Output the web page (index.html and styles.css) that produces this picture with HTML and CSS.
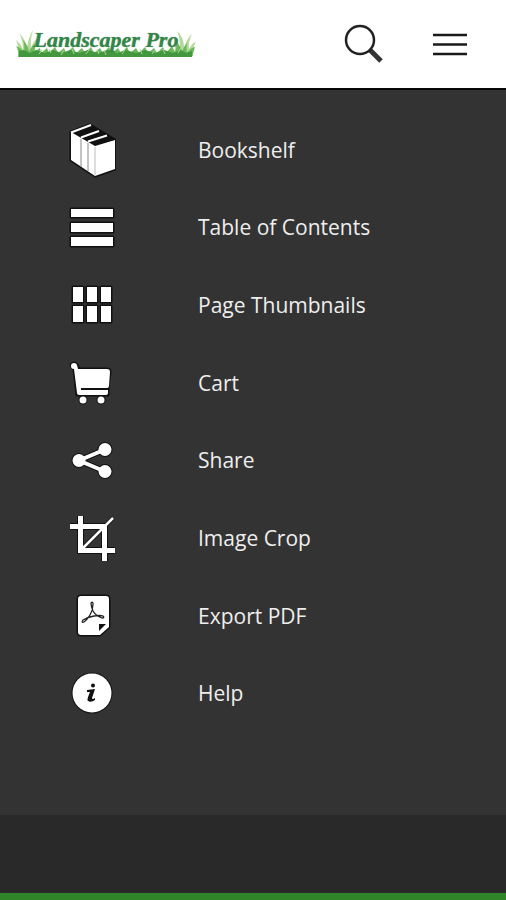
FILE: index.html
```html
<!DOCTYPE html>
<html lang="en">
<head>
<meta charset="utf-8">
<meta name="viewport" content="width=device-width, initial-scale=1">
<title>Landscaper Pro</title>
<link rel="stylesheet" href="styles.css">
</head>
<body>
<header class="header">
  <a class="logo" href="#">
    <svg class="logo-grass" viewBox="0 0 180 32" aria-hidden="true">
      <path fill="#b4d99a" d="M3 28Q3 18 0 12Q6 17 7 22Q7 12 3 5Q10 12 11 21Q12 10 17 2Q14 12 15 20Q18 12 22 10Q18 18 19 28ZM158 28Q160 18 158 10Q163 14 164 21Q164 9 161 3Q168 9 168 20Q171 10 176 6Q172 14 173 21Q176 15 180 14Q176 20 177 28Z"/>
      <path fill="#6ab85c" d="M2 29Q3 22 0 18Q6 20 8 25Q9 17 7 12Q12 17 13 24Q16 17 20 15L18 24L24 20L25 25L31 20L33 25L39 19L42 25L48 20L50 25L57 19L60 25L66 20L69 25L75 19L78 25L84 20L87 25L93 19L96 25L102 20L105 25L111 19L114 25L120 20L123 25L129 19L132 25L138 20L141 25L147 19L150 25L156 18L159 24Q161 18 160 14Q165 18 166 24Q168 18 171 15Q170 20 171 25Q174 20 179 19L176 29Z"/>
      <path fill="#43973f" d="M3 29V23L8 22L14 25L20 22L29 25L37 22L46 25L54 22L63 25L72 22L82 25L92 22L101 25L110 22L120 25L129 22L139 25L148 22L157 25L165 22L170 25L176 23V29Z"/>
      <path fill="none" stroke="#a8d592" d="M23 26L26 22M35 25L33 21M45 27L48 22M58 26L56 21M70 26L73 22M83 26L81 21M90 27L88 22M106 26L109 22M126 26L124 21M136 26L139 22M149 26L147 21M162 25L165 20"/>
    </svg>
    <span class="logo-text">Landscaper Pro</span>
  </a>
  <div class="actions">
    <button class="action" type="button" aria-label="Search">
      <svg class="action-icon" viewBox="0 0 40 40" fill="none" aria-hidden="true">
        <path d="M26 26L37 37" stroke="#333" stroke-width="5"/>
        <circle cx="16" cy="16" r="14" stroke="#222" stroke-width="2.500"/>
      </svg>
    </button>
    <button class="action" type="button" aria-label="Menu">
      <svg class="action-icon" viewBox="0 0 40 40" fill="none" stroke="#1a1a1a" stroke-width="2.500" aria-hidden="true">
        <path d="M3 11H37M3 20.500H37M3 30H37"/>
      </svg>
    </button>
  </div>
</header>
<nav class="menu" aria-label="Main">
  <a class="item" href="#">
    <svg class="icon" viewBox="0 0 48 56" aria-hidden="true">
      <path class="edge" d="M3 10L22 3L47 18V47L27 54L3 38Z"/>
      <path d="M3 10L27 24L47 18V47L27 54L3 38Z"/>
      <path fill="#111" d="M6 11L23 5L46 18L27 23Z"/>
      <path stroke="#fff" stroke-width="2" d="M3 10.500L23 3M13 15.500L31 9M20 19.500L39 13.500"/>
      <path stroke="#888" d="M13 17V45M20 21V49"/>
      <path stroke="#bbb" d="M27 25V53"/>
    </svg>
    <span>Bookshelf</span>
  </a>
  <a class="item" href="#">
    <svg class="icon" viewBox="0 0 48 56" aria-hidden="true">
      <path class="edge" d="M3 10H45V18H3ZM3 24H45V33H3ZM3 38H45V47H3Z"/>
      <path d="M3 10H45V18H3ZM3 24H45V33H3ZM3 38H45V47H3Z"/>
    </svg>
    <span>Table of Contents</span>
  </a>
  <a class="item" href="#">
    <svg class="icon" viewBox="0 0 48 56" aria-hidden="true">
      <path class="edge" d="M5 10H15V25H5ZM19 10H29V25H19ZM33 10H43V25H33ZM5 29H15V45H5ZM19 29H29V45H19ZM33 29H43V45H33Z"/>
      <path d="M5 10H15V25H5ZM19 10H29V25H19ZM33 10H43V25H33ZM5 29H15V45H5ZM19 29H29V45H19ZM33 29H43V45H33Z"/>
    </svg>
    <span>Page Thumbnails</span>
  </a>
  <a class="item" href="#">
    <svg class="icon" viewBox="0 0 48 56" aria-hidden="true">
      <path class="edge" d="M3 10Q6 6 9 10L11 14H39Q42 14 42 17L40 33V40H9L6 14Z"/>
      <path d="M6 8A3 3 0 0 1 9 10L10 14H39Q42 14 42 17L41 31Q41 33 39 33H13V35H40V38Q40 40 38 40H11Q9 40 9 38L6 14A3 3 0 1 1 6 8Z"/>
      <circle class="edge" cx="15" cy="45" r="3"/><circle class="edge" cx="33" cy="45" r="3"/>
      <circle cx="15" cy="45" r="3.500"/><circle cx="33" cy="45" r="3.500"/>
    </svg>
    <span>Cart</span>
  </a>
  <a class="item" href="#">
    <svg class="icon" viewBox="0 0 48 56" aria-hidden="true">
      <g class="edge"><circle cx="11" cy="28.500" r="6"/><circle cx="37" cy="17.500" r="6"/><circle cx="37" cy="39.500" r="6"/></g>
      <path fill="none" stroke="#111" stroke-width="6" d="M37 17.500L11 28.500L37 39.500"/>
      <path fill="none" stroke="#fff" stroke-width="4" d="M37 17.500L11 28.500L37 39.500"/>
      <circle cx="11" cy="28.500" r="6.500"/><circle cx="37" cy="17.500" r="6.500"/><circle cx="37" cy="39.500" r="6.500"/>
    </svg>
    <span>Share</span>
  </a>
  <a class="item" href="#">
    <svg class="icon" viewBox="0 0 48 56" aria-hidden="true">
      <path fill="none" stroke="#111" stroke-width="7" d="M12.500 6V40.500H47M2 16.500H36.500V51"/>
      <path fill="none" stroke="#111" stroke-width="4.500" d="M14 39L45 8"/>
      <path fill="none" stroke="#fff" stroke-width="5" d="M12.500 6V40.500H47M2 16.500H36.500V51"/>
      <path fill="none" stroke="#fff" stroke-width="2.500" d="M14 39L45 8"/>
    </svg>
    <span>Image Crop</span>
  </a>
  <a class="item" href="#">
    <svg class="icon" viewBox="0 0 48 56" aria-hidden="true">
      <path class="edge" d="M13 8H38Q41 8 41 11V39L32 47H13Q10 47 10 44V11Q10 8 13 8Z"/>
      <path d="M13 8H38Q41 8 41 11V39L32 47H13Q10 47 10 44V11Q10 8 13 8Z"/>
      <path fill="#111" d="M31 36H38L31 43Z"/>
      <path fill="none" stroke="#222" stroke-width="1.300" d="M23 15Q25 13 25 16Q25 22 22 27Q19 32 16 34Q13 35 15 32Q20 29 26 28Q32 27 35 28Q37 30 34 30Q28 28 25 23Q23 18 23 15Z"/>
    </svg>
    <span>Export PDF</span>
  </a>
  <a class="item" href="#">
    <svg class="icon" viewBox="0 0 48 56" aria-hidden="true">
      <circle class="edge" cx="24" cy="28" r="19"/>
      <circle cx="24" cy="28" r="19.500"/>
      <circle fill="#111" cx="25" cy="20.500" r="2"/>
      <path fill="#111" d="M19 25L27 24L24 33Q24 35 27 33L27 35Q23 38 20 36Q19 35 20 32L22 27L19 27Z"/>
    </svg>
    <span>Help</span>
  </a>
</nav>
<footer class="footer"></footer>
</body>
</html>
```
FILE: styles.css
```css
* { box-sizing: border-box; }

body {
  display: flex;
  flex-direction: column;
  min-height: 100vh;
  margin: 0;
  background: #333;
  color: #eee;
  font-family: "Open Sans", "Noto Sans", sans-serif;
}

.header {
  display: flex;
  align-items: center;
  justify-content: space-between;
  height: 90px;
  padding: 0 36px 0 16px;
  background: #fff;
  border-bottom: 2px solid #080808;
}

.logo {
  display: grid;
  width: 180px;
  text-decoration: none;
}

.logo-grass,
.logo-text { grid-area: 1 / 1; }

.logo-grass {
  display: block;
  width: 100%;
}

.logo-text {
  justify-self: center;
  color: #2f8a46;
  font: italic bold 22px/24px "Liberation Serif", serif;
  text-shadow: 0 0 1px #777;
  white-space: nowrap;
}

.actions {
  display: flex;
  gap: 46px;
}

.action {
  padding: 0;
  border: 0;
  background: none;
  cursor: pointer;
}

.action-icon {
  display: block;
  width: 40px;
  height: 40px;
}

.menu {
  display: flex;
  flex: 1;
  flex-direction: column;
  padding: 21px 0 83px;
}

.item {
  display: flex;
  flex: 1;
  align-items: center;
  gap: 82px;
  padding-left: 68px;
  color: inherit;
  font-size: 21px;
  line-height: 28px;
  text-decoration: none;
}

.icon {
  flex: none;
  width: 48px;
  height: 56px;
  fill: #fff;
}

.edge {
  fill: #111;
  stroke: #111;
  stroke-width: 3;
  stroke-linejoin: round;
}

.footer {
  height: 85px;
  background: #292929;
  border-bottom: 7px solid #2f8528;
}
```
